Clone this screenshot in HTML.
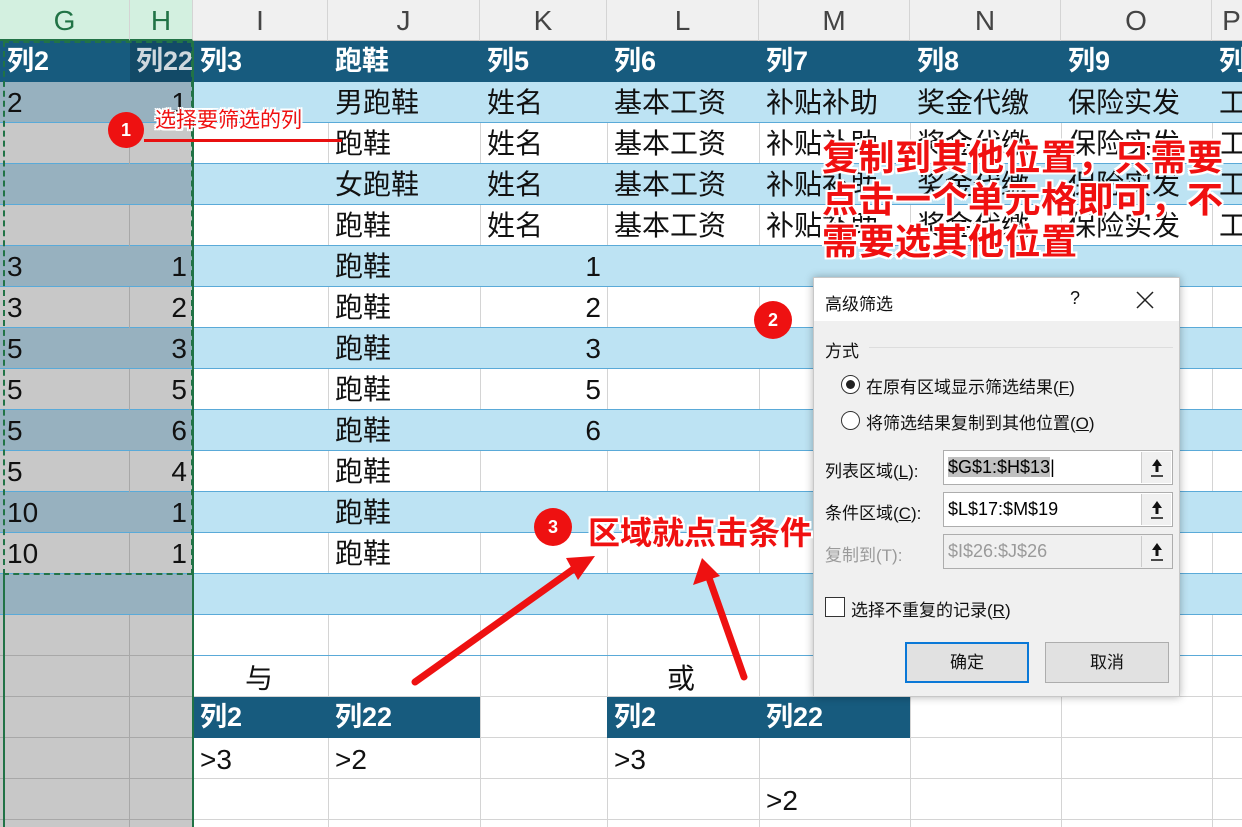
<!DOCTYPE html>
<html><head><meta charset="utf-8">
<style>
*{margin:0;padding:0;box-sizing:border-box}
body{width:1242px;height:827px;overflow:hidden;background:#fff;position:relative;font-family:"Liberation Sans","Noto Sans CJK SC",sans-serif;}
.a{position:absolute}
.ch{position:absolute;top:0;height:41px;background:#f0f0f0;border-right:1px solid #d4d4d4;border-bottom:1px solid #bdbdbd;text-align:center;font-size:28px;line-height:41px;color:#444}
.row{position:absolute;left:0;width:1242px;height:41px}
.c{position:absolute;top:0;height:41px;font-size:28px;line-height:41px;color:#111;white-space:nowrap;padding-left:7px}
.r{text-align:right;padding-right:6px;padding-left:0}
.h{color:#fff;font-weight:bold;font-size:27px}
.vl{position:absolute;top:41px;width:1px;height:786px;background:#d4d4d4}
.red{color:#f01010;font-weight:bold;text-shadow:2px 0 #fff,-2px 0 #fff,0 2px #fff,0 -2px #fff,2px 2px #fff,-2px -2px #fff,2px -2px #fff,-2px 2px #fff}
.circ{position:absolute;border-radius:50%;background:#ee1111;color:#fff;text-align:center;font-weight:bold}
.dl{font-size:17px;color:#111}
.inp{position:absolute;height:35px;border:1px solid #adadad;background:#fff;font-size:18px;line-height:33px;padding-left:4px}
.btnup{position:absolute;right:1px;top:1px;width:30px;height:31px;background:#f0f0f0;border-left:1px solid #ccc}
.blue{position:absolute;left:193px;width:1049px;height:41px;background:#bde3f3;border-bottom:1px solid #5aaad8}
.wht{position:absolute;left:193px;width:1049px;height:41px;border-bottom:1px solid #5aaad8}
</style></head><body>

<div class="ch" style="left:0;width:130px;background:#d3f0e0;color:#217346;border-bottom:2px solid #217346">G</div>
<div class="ch" style="left:130px;width:63px;background:#d3f0e0;color:#217346;border-bottom:2px solid #217346">H</div>
<div class="ch" style="left:193px;width:135px">I</div>
<div class="ch" style="left:328px;width:152px">J</div>
<div class="ch" style="left:480px;width:127px">K</div>
<div class="ch" style="left:607px;width:152px">L</div>
<div class="ch" style="left:759px;width:151px">M</div>
<div class="ch" style="left:910px;width:151px">N</div>
<div class="ch" style="left:1061px;width:151px">O</div>
<div class="ch" style="left:1212px;width:40px">P</div>

<div class="vl" style="left:328px"></div><div class="vl" style="left:480px"></div><div class="vl" style="left:607px"></div><div class="vl" style="left:759px"></div><div class="vl" style="left:910px"></div><div class="vl" style="left:1061px"></div><div class="vl" style="left:1212px"></div>

<div class="a" style="left:0;top:41px;width:1242px;height:41px;background:#175b7e"></div>
<div class="a" style="left:130px;top:41px;width:63px;height:41px;background:#124a67"></div>

<div class="blue" style="top:82px"></div>
<div class="wht" style="top:123px"></div>
<div class="blue" style="top:164px"></div>
<div class="wht" style="top:205px"></div>
<div class="blue" style="top:246px"></div>
<div class="wht" style="top:287px"></div>
<div class="blue" style="top:328px"></div>
<div class="wht" style="top:369px"></div>
<div class="blue" style="top:410px"></div>
<div class="wht" style="top:451px"></div>
<div class="blue" style="top:492px"></div>
<div class="wht" style="top:533px"></div>
<div class="blue" style="top:574px"></div>
<div class="wht" style="top:615px"></div>
<div class="a" style="left:193px;top:656px;width:1049px;height:41px;border-bottom:1px solid #d4d4d4"></div>
<div class="a" style="left:193px;top:697px;width:1049px;height:41px;border-bottom:1px solid #d4d4d4"></div>
<div class="a" style="left:193px;top:738px;width:1049px;height:41px;border-bottom:1px solid #d4d4d4"></div>
<div class="a" style="left:193px;top:779px;width:1049px;height:41px;border-bottom:1px solid #d4d4d4"></div>

<div class="a" style="left:0;top:82px;width:193px;height:745px;background:#c8c8c8"></div>
<div class="a" style="left:0;top:82px;width:193px;height:41px;background:#97b1bf;border-bottom:1px solid #5aaad8"></div>
<div class="a" style="left:0;top:164px;width:193px;height:41px;background:#97b1bf;border-bottom:1px solid #5aaad8"></div>
<div class="a" style="left:0;top:246px;width:193px;height:41px;background:#97b1bf;border-bottom:1px solid #5aaad8"></div>
<div class="a" style="left:0;top:328px;width:193px;height:41px;background:#97b1bf;border-bottom:1px solid #5aaad8"></div>
<div class="a" style="left:0;top:410px;width:193px;height:41px;background:#97b1bf;border-bottom:1px solid #5aaad8"></div>
<div class="a" style="left:0;top:492px;width:193px;height:41px;background:#97b1bf;border-bottom:1px solid #5aaad8"></div>
<div class="a" style="left:0;top:574px;width:193px;height:41px;background:#97b1bf;border-bottom:1px solid #5aaad8"></div>
<div class="a" style="left:0;top:123px;width:193px;height:41px;border-bottom:1px solid #5aaad8"></div>
<div class="a" style="left:0;top:205px;width:193px;height:41px;border-bottom:1px solid #5aaad8"></div>
<div class="a" style="left:0;top:287px;width:193px;height:41px;border-bottom:1px solid #5aaad8"></div>
<div class="a" style="left:0;top:369px;width:193px;height:41px;border-bottom:1px solid #5aaad8"></div>
<div class="a" style="left:0;top:451px;width:193px;height:41px;border-bottom:1px solid #5aaad8"></div>
<div class="a" style="left:0;top:533px;width:193px;height:41px;border-bottom:1px solid #5aaad8"></div>
<div class="a" style="left:0;top:655px;width:193px;height:1px;background:#a8a8a8"></div>
<div class="a" style="left:0;top:696px;width:193px;height:1px;background:#a8a8a8"></div>
<div class="a" style="left:0;top:737px;width:193px;height:1px;background:#a8a8a8"></div>
<div class="a" style="left:0;top:778px;width:193px;height:1px;background:#a8a8a8"></div>
<div class="a" style="left:0;top:819px;width:193px;height:1px;background:#a8a8a8"></div>
<div class="a" style="left:129px;top:123px;width:1px;height:41px;background:#a8a8a8"></div>
<div class="a" style="left:129px;top:205px;width:1px;height:41px;background:#a8a8a8"></div>
<div class="a" style="left:129px;top:287px;width:1px;height:41px;background:#a8a8a8"></div>
<div class="a" style="left:129px;top:369px;width:1px;height:41px;background:#a8a8a8"></div>
<div class="a" style="left:129px;top:451px;width:1px;height:41px;background:#a8a8a8"></div>
<div class="a" style="left:129px;top:533px;width:1px;height:41px;background:#a8a8a8"></div>
<div class="a" style="left:129px;top:615px;width:1px;height:212px;background:#a8a8a8"></div>

<div class="row" style="top:41px">
<div class="c h" style="left:0">列2</div><div class="c h" style="left:130px;width:63px;overflow:hidden;padding-left:6px;color:#cfd8de">列22</div>
<div class="c h" style="left:193px">列3</div><div class="c h" style="left:328px">跑鞋</div><div class="c h" style="left:480px">列5</div><div class="c h" style="left:607px">列6</div><div class="c h" style="left:759px">列7</div><div class="c h" style="left:910px">列8</div><div class="c h" style="left:1061px">列9</div><div class="c h" style="left:1212px">列</div>
</div>
<div class="row" style="top:82px"><div class="c" style="left:0">2</div><div class="c r" style="left:130px;width:63px">1</div><div class="c" style="left:328px">男跑鞋</div><div class="c" style="left:480px">姓名</div><div class="c" style="left:607px">基本工资</div><div class="c" style="left:759px">补贴补助</div><div class="c" style="left:910px">奖金代缴</div><div class="c" style="left:1061px">保险实发</div><div class="c" style="left:1212px">工</div></div>
<div class="row" style="top:123px"><div class="c" style="left:328px">跑鞋</div><div class="c" style="left:480px">姓名</div><div class="c" style="left:607px">基本工资</div><div class="c" style="left:759px">补贴补助</div><div class="c" style="left:910px">奖金代缴</div><div class="c" style="left:1061px">保险实发</div><div class="c" style="left:1212px">工</div></div>
<div class="row" style="top:164px"><div class="c" style="left:328px">女跑鞋</div><div class="c" style="left:480px">姓名</div><div class="c" style="left:607px">基本工资</div><div class="c" style="left:759px">补贴补助</div><div class="c" style="left:910px">奖金代缴</div><div class="c" style="left:1061px">保险实发</div><div class="c" style="left:1212px">工</div></div>
<div class="row" style="top:205px"><div class="c" style="left:328px">跑鞋</div><div class="c" style="left:480px">姓名</div><div class="c" style="left:607px">基本工资</div><div class="c" style="left:759px">补贴补助</div><div class="c" style="left:910px">奖金代缴</div><div class="c" style="left:1061px">保险实发</div><div class="c" style="left:1212px">工</div></div>
<div class="row" style="top:246px"><div class="c" style="left:0">3</div><div class="c r" style="left:130px;width:63px">1</div><div class="c" style="left:328px">跑鞋</div><div class="c r" style="left:480px;width:127px">1</div></div>
<div class="row" style="top:287px"><div class="c" style="left:0">3</div><div class="c r" style="left:130px;width:63px">2</div><div class="c" style="left:328px">跑鞋</div><div class="c r" style="left:480px;width:127px">2</div></div>
<div class="row" style="top:328px"><div class="c" style="left:0">5</div><div class="c r" style="left:130px;width:63px">3</div><div class="c" style="left:328px">跑鞋</div><div class="c r" style="left:480px;width:127px">3</div></div>
<div class="row" style="top:369px"><div class="c" style="left:0">5</div><div class="c r" style="left:130px;width:63px">5</div><div class="c" style="left:328px">跑鞋</div><div class="c r" style="left:480px;width:127px">5</div></div>
<div class="row" style="top:410px"><div class="c" style="left:0">5</div><div class="c r" style="left:130px;width:63px">6</div><div class="c" style="left:328px">跑鞋</div><div class="c r" style="left:480px;width:127px">6</div></div>
<div class="row" style="top:451px"><div class="c" style="left:0">5</div><div class="c r" style="left:130px;width:63px">4</div><div class="c" style="left:328px">跑鞋</div></div>
<div class="row" style="top:492px"><div class="c" style="left:0">10</div><div class="c r" style="left:130px;width:63px">1</div><div class="c" style="left:328px">跑鞋</div></div>
<div class="row" style="top:533px"><div class="c" style="left:0">10</div><div class="c r" style="left:130px;width:63px">1</div><div class="c" style="left:328px">跑鞋</div></div>

<div class="row" style="top:658px"><div class="c" style="left:238px">与</div><div class="c" style="left:660px">或</div></div>
<div class="a" style="left:193px;top:697px;width:287px;height:41px;background:#175b7e"></div>
<div class="a" style="left:607px;top:697px;width:303px;height:41px;background:#175b7e"></div>
<div class="row" style="top:697px"><div class="c h" style="left:193px">列2</div><div class="c h" style="left:328px">列22</div><div class="c h" style="left:607px">列2</div><div class="c h" style="left:759px">列22</div></div>
<div class="row" style="top:739px"><div class="c" style="left:193px">&gt;3</div><div class="c" style="left:328px">&gt;2</div><div class="c" style="left:607px">&gt;3</div></div>
<div class="row" style="top:780px"><div class="c" style="left:759px">&gt;2</div></div>

<div class="a" style="left:3px;top:41px;width:190px;height:534px;border:2px dashed #217346"></div>
<div class="a" style="left:192px;top:41px;width:2px;height:786px;background:#217346"></div>
<div class="a" style="left:3px;top:575px;width:2px;height:252px;background:#217346"></div>

<div class="circ" style="left:108px;top:112px;width:36px;height:36px;font-size:18px;line-height:36px">1</div>
<div class="a red" style="left:155px;top:104px;font-size:21px;font-weight:normal;white-space:nowrap">选择要筛选的列</div>
<div class="a" style="left:144px;top:139px;width:198px;height:3px;background:#e81010"></div>

<div class="a red" style="left:822px;top:137px;font-size:36px;line-height:42px;white-space:nowrap;letter-spacing:0.5px">复制到其他位置，只需要<br>点击一个单元格即可，不<br>需要选其他位置</div>

<div class="a" style="left:813px;top:277px;width:367px;height:420px;background:#f0f0f0;border:1px solid #c8c8c8;box-shadow:0 0 8px rgba(0,0,0,.3)">
 <div class="a" style="left:0;top:0;width:365px;height:43px;background:#fff"></div>
 <div class="a dl" style="left:11px;top:12px">高级筛选</div>
 <div class="a dl" style="left:256px;top:10px;font-size:18px">?</div>
 <svg class="a" style="left:322px;top:13px" width="18" height="18"><path d="M1 1L17 17M17 1L1 17" stroke="#222" stroke-width="1.5"/></svg>
 <div class="a dl" style="left:11px;top:59px">方式</div>
 <div class="a" style="left:55px;top:69px;width:304px;height:1px;background:#ddd"></div>
 <div class="a" style="left:27px;top:97px;width:19px;height:19px;border:1px solid #333;border-radius:50%;background:#fff"><div class="a" style="left:4px;top:4px;width:9px;height:9px;border-radius:50%;background:#222"></div></div>
 <div class="a dl" style="left:52px;top:95px">在原有区域显示筛选结果(<u>F</u>)</div>
 <div class="a" style="left:27px;top:133px;width:19px;height:19px;border:1px solid #333;border-radius:50%;background:#fff"></div>
 <div class="a dl" style="left:52px;top:131px">将筛选结果复制到其他位置(<u>O</u>)</div>
 <div class="a dl" style="left:11px;top:179px">列表区域(<u>L</u>):</div>
 <div class="inp" style="left:129px;top:172px;width:230px"><span style="background:#c0c0c0">$G$1:$H$13</span>|<div class="btnup"><svg width="30" height="31"><path d="M15 7L10 14H13.5V20H16.5V14H20Z" fill="#111"/><path d="M9 24H21" stroke="#111" stroke-width="1.5"/></svg></div></div>
 <div class="a dl" style="left:11px;top:221px">条件区域(<u>C</u>):</div>
 <div class="inp" style="left:129px;top:214px;width:230px">$L$17:$M$19<div class="btnup"><svg width="30" height="31"><path d="M15 7L10 14H13.5V20H16.5V14H20Z" fill="#111"/><path d="M9 24H21" stroke="#111" stroke-width="1.5"/></svg></div></div>
 <div class="a dl" style="left:11px;top:263px;color:#9a9a9a">复制到(T):</div>
 <div class="inp" style="left:129px;top:256px;width:230px;color:#9a9a9a;background:#f0f0f0">$I$26:$J$26<div class="btnup"><svg width="30" height="31"><path d="M15 7L10 14H13.5V20H16.5V14H20Z" fill="#111"/><path d="M9 24H21" stroke="#111" stroke-width="1.5"/></svg></div></div>
 <div class="a" style="left:11px;top:319px;width:20px;height:20px;border:1px solid #333;background:#fff"></div>
 <div class="a dl" style="left:37px;top:318px">选择不重复的记录(<u>R</u>)</div>
 <div class="a dl" style="left:91px;top:364px;width:124px;height:41px;border:2px solid #0a78d7;background:#e1e1e1;text-align:center;line-height:37px">确定</div>
 <div class="a dl" style="left:231px;top:364px;width:124px;height:41px;border:1px solid #adadad;background:#e1e1e1;text-align:center;line-height:39px">取消</div>
</div>

<div class="circ" style="left:754px;top:301px;width:38px;height:38px;font-size:18px;line-height:38px">2</div>
<div class="circ" style="left:534px;top:508px;width:38px;height:38px;font-size:18px;line-height:38px">3</div>
<div class="a red" style="left:588px;top:508px;font-size:32px;white-space:nowrap">区域就点击条件</div>

<svg class="a" style="left:0;top:0" width="1242" height="827">
 <g stroke="#ee1111" stroke-width="7" stroke-linecap="round">
  <line x1="415" y1="682" x2="575" y2="568"/>
  <line x1="744" y1="677" x2="708" y2="575"/>
 </g>
 <polygon points="595,556 566,558 578,580" fill="#ee1111"/>
 <polygon points="702,558 693,585 720,576" fill="#ee1111"/>
</svg>
</body></html>
